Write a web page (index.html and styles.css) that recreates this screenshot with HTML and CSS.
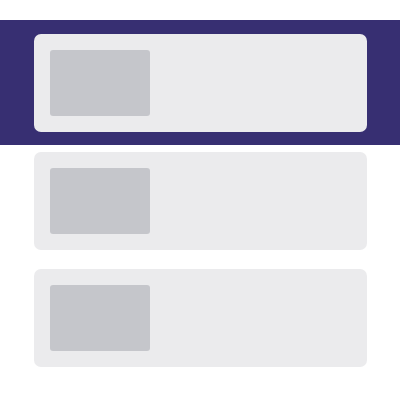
FILE: index.html
```html
<!DOCTYPE html>
<html>
<head>
<meta charset="utf-8">
<link rel="stylesheet" href="styles.css">
</head>
<body>
<div class="page">
  <div class="band">
    <div class="card"><div class="thumb"></div></div>
  </div>
  <div class="list">
    <div class="card"><div class="thumb"></div></div>
    <div class="card"><div class="thumb"></div></div>
  </div>
</div>
</body>
</html>
```
FILE: styles.css
```css
html, body {
  margin: 0;
  padding: 0;
  background: #ffffff;
  font-family: "Liberation Sans", sans-serif;
}
.page {
  width: 400px;
  height: 400px;
  padding-top: 20px;
  box-sizing: border-box;
}
.band {
  background: #372f72;
  height: 125px;
  box-sizing: border-box;
  padding-top: 14px;
}
.list {
  display: flex;
  flex-direction: column;
  gap: 19px;
  padding-top: 7px;
}
.card {
  margin-left: 34px;
  width: 333px;
  height: 98px;
  box-sizing: border-box;
  padding: 16px;
  background: #ebebed;
  border-radius: 7px;
}
.thumb {
  width: 100px;
  height: 66px;
  background: #c5c6cb;
  border-radius: 3px;
}
```
